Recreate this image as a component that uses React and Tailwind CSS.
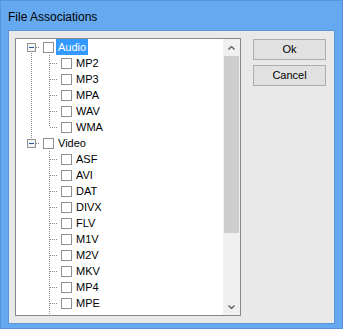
import React from 'react';

const tree = [
  { label: 'Audio', selected: true, more: false, children: ['MP2', 'MP3', 'MPA', 'WAV', 'WMA'] },
  // list is scrolled: more Video entries sit below MPE
  { label: 'Video', more: true, children: ['ASF', 'AVI', 'DAT', 'DIVX', 'FLV', 'M1V', 'M2V', 'MKV', 'MP4', 'MPE'] },
];

const dot = { stroke: '#8a8a8a', strokeWidth: 1, strokeDasharray: '1 1', shapeRendering: 'crispEdges' };

// one 18x16 cell of tree connector lines
const Cell = ({ up, down, right, expander }) => (
  <svg width="18" height="16" className="block shrink-0">
    {up && <line x1="9.5" y1="0" x2="9.5" y2="8" {...dot} />}
    {down && <line x1="9.5" y1="8" x2="9.5" y2="16" {...dot} />}
    {right && <line x1={expander ? 14 : 10} y1="8.5" x2="18" y2="8.5" {...dot} />}
    {expander && (
      <g shapeRendering="crispEdges">
        <rect x="5.5" y="4.5" width="8" height="8" fill="#f4f4f4" stroke="#919191" />
        <line x1="7" y1="8.5" x2="12" y2="8.5" stroke="#2f55a4" />
      </g>
    )}
  </svg>
);

const Check = () => (
  <div className="ml-[3px] h-[11px] w-[11px] shrink-0 border border-[#8f8f8f] bg-white" />
);

const Row = ({ cells, label, selected }) => (
  <div className="flex h-[16px] items-center">
    {cells}
    <Check />
    <span
      className={
        selected
          ? 'ml-[2px] flex h-[16px] items-center bg-[#3399ff] px-[2px] text-white'
          : 'ml-[2px] flex h-[16px] items-center px-[2px] text-black'
      }
    >
      {label}
    </span>
  </div>
);

export default function App() {
  const rows = [];
  tree.forEach((node, i) => {
    const first = i === 0;
    const last = i === tree.length - 1;
    rows.push(
      <Row
        key={node.label}
        label={node.label}
        selected={node.selected}
        cells={<Cell up={!first} down={!last} right expander />}
      />
    );
    node.children.forEach((c, j) => {
      const lastChild = j === node.children.length - 1 && !node.more;
      rows.push(
        <Row
          key={node.label + c}
          label={c}
          cells={
            <>
              <Cell up={!last} down={!last} />
              <Cell up down={!lastChild} right />
            </>
          }
        />
      );
    });
  });

  return (
    <div
      className="flex h-[329px] w-[343px] flex-col border border-[#5796dd] bg-[#65a9f1]"
      style={{ fontFamily: '"Liberation Sans", Arial, sans-serif' }}
    >
      <div className="flex h-[29px] shrink-0 items-center pl-[7px] pt-[2px] text-[12px] text-black">
        File Associations
      </div>
      <div className="mx-[7px] mb-[4px] flex flex-1 border border-[#5a97da] bg-[#e9e9e9] pl-[6px] pt-[7px] text-[11px]">
        <div className="flex h-[278px] w-[226px] border border-[#828790] bg-white">
          <div className="flex-1 overflow-hidden pl-[6px]">
            {rows}
            {/* partly scrolled-in next row: only the connector line shows */}
            <div className="flex h-[4px] overflow-hidden">
              <Cell />
              <Cell up down />
            </div>
          </div>
          <div className="flex w-[17px] flex-col bg-[#f0f0f0]">
            <div className="flex h-[17px] items-center justify-center">
              <svg width="7" height="4" viewBox="0 0 7 4">
                <path d="M0.5 3.5 L3.5 0.5 L6.5 3.5" fill="none" stroke="#606060" strokeWidth="1.4" />
              </svg>
            </div>
            <div className="mx-[1px] h-[177px] bg-[#cdcdcd]" />
            <div className="flex-1" />
            <div className="flex h-[17px] items-center justify-center">
              <svg width="7" height="4" viewBox="0 0 7 4">
                <path d="M0.5 0.5 L3.5 3.5 L6.5 0.5" fill="none" stroke="#606060" strokeWidth="1.4" />
              </svg>
            </div>
          </div>
        </div>
        <div className="ml-[12px] mt-[1px] flex flex-col gap-[5px]">
          <button className="flex h-[21px] w-[73px] items-center justify-center border border-[#adadad] bg-[#e1e1e1] text-black">
            Ok
          </button>
          <button className="flex h-[21px] w-[73px] items-center justify-center border border-[#adadad] bg-[#e1e1e1] text-black">
            Cancel
          </button>
        </div>
      </div>
    </div>
  );
}
